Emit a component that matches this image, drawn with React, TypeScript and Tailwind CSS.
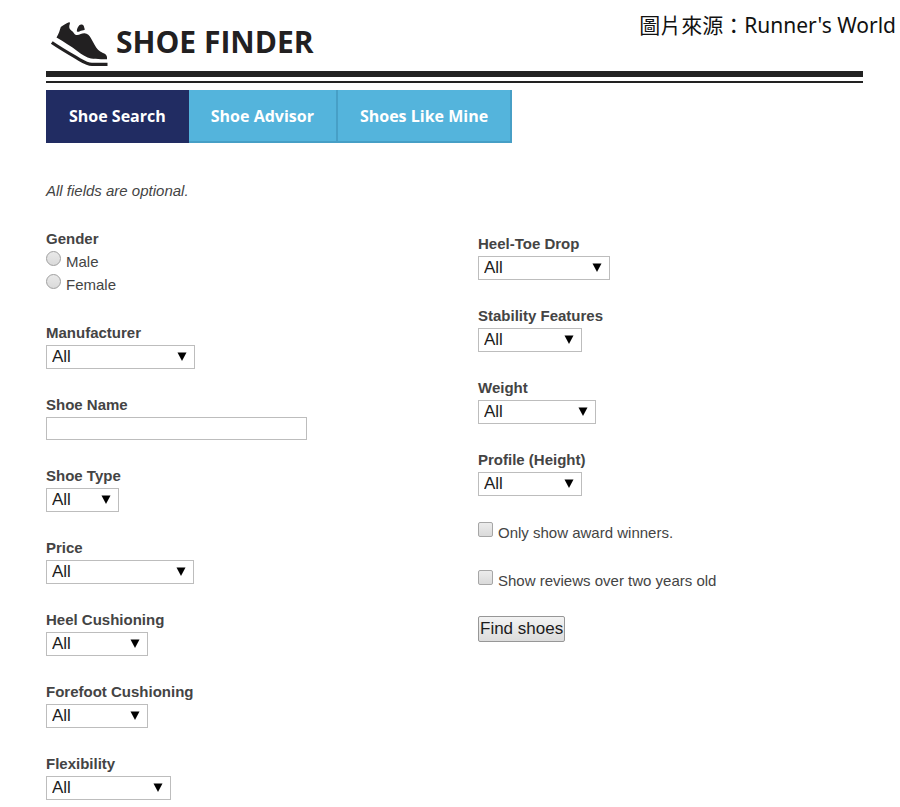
import type { ReactNode } from "react";

const tabs = [
  { label: "Shoe Search", className: "bg-[#212c62] px-[23px]" },
  { label: "Shoe Advisor", className: "bg-[#54b4dc] px-[22px] border-r-2 border-b-2 border-[#479fc6]" },
  { label: "Shoes Like Mine", className: "bg-[#54b4dc] px-[22px] border-r-2 border-b-2 border-[#479fc6]" },
];

function ShoeLogo() {
  return (
    <svg viewBox="0 0 58 46" className="h-[46px] w-[58px]" fill="#222021" aria-hidden="true">
      <path d="M19 1.200C16 2.500 13 4.200 10.800 6C9.700 9.500 8.800 12.700 6.500 16.600C14 21 21 25.500 27.500 30.200C32 33.500 36.500 36.600 41 37.600C45 38.400 51 38.200 57 38.200C57.300 35 56.500 33.300 53 32C49 30.500 46.500 27.500 44.700 24L40.800 17C39.500 14.500 37.500 12.400 34.500 12.300C31.500 12.200 29 14.600 26 13.900C23.900 13.300 23.900 11.500 22.300 10.200C19.500 8.700 18.500 6.500 19.900 2.600C20.100 1.700 19.700 1 19 1.200Z" />
      <path d="M26.800 10.300C27 7.500 28 5.800 29.300 4.300C30.600 3 32.700 3.300 33.700 4.800L34.800 8.500C34.300 9.600 32.500 9.200 31 9.700C29.500 10.200 28.200 11.500 26.800 10.300Z" />
      <path d="M1.800 21.500C10.500 27.500 21 33.500 30 38.800C34 41.200 37.500 43.300 42 43.300H57.500" fill="none" stroke="#222021" strokeWidth="3.200" />
    </svg>
  );
}

function Field({ id, label, children }: { id: string; label: string; children: ReactNode }) {
  return (
    <div className="flex flex-col items-start">
      <label htmlFor={id} className="text-[15px] leading-6 font-bold">
        {label}
      </label>
      {children}
    </div>
  );
}

function SelectField({ id, label, width }: { id: string; label: string; width: string }) {
  return (
    <Field id={id} label={label}>
      <div className={`relative ${width}`}>
        <select
          id={id}
          className="block h-6 w-full appearance-none border border-[#bdbdbd] bg-white pl-[5px] text-[17px] leading-[22px] text-[#1c1c1c]"
        >
          <option>All</option>
        </select>
        <svg viewBox="0 0 10 9" className="pointer-events-none absolute top-[7px] right-2 h-[9px] w-[10px]" aria-hidden="true">
          <path d="M0.500 0.500H9.500L5 9Z" fill="#000" />
        </svg>
      </div>
    </Field>
  );
}

function Radio({ label }: { label: string }) {
  return (
    <label className="flex h-[23px] items-start gap-[5px]">
      <input
        type="radio"
        name="gender"
        className="size-[15px] appearance-none rounded-full border border-[#9f9f9f] bg-linear-to-b from-[#e9e9e9] to-[#dadada] checked:border-4"
      />
      <span className="text-[15px] leading-[22px]">{label}</span>
    </label>
  );
}

function Checkbox({ label }: { label: string }) {
  return (
    <label className="flex h-6 items-start gap-[5px]">
      <input
        type="checkbox"
        className="mt-[2px] size-[15px] appearance-none rounded-xs border border-[#a6a6a6] bg-linear-to-b from-[#ececec] to-[#dadada] checked:bg-[#555]"
      />
      <span className="text-[15px] leading-[26px]">{label}</span>
    </label>
  );
}

export default function App() {
  return (
    <div className="bg-white font-['Liberation_Sans',Arial,sans-serif] text-[#444]">
      <header className="flex items-start justify-between pt-3 pr-1 pl-[50px]">
        <div className="flex items-start gap-2 pt-[9px] pb-1">
          <ShoeLogo />
          <h1 className="font-['Open_Sans',sans-serif] text-[30px] leading-[42px] font-bold whitespace-nowrap text-[#222021]">
            SHOE FINDER
          </h1>
        </div>
        <p className="font-['Noto_Sans','Noto_Sans_CJK_TC',sans-serif] text-[21px] leading-[26px] whitespace-nowrap text-[#111]">
          圖片來源：Runner's World
        </p>
      </header>

      <main className="pr-[37px] pl-[46px]">
        <div className="h-[12px] border-t-6 border-b-2 border-[#222]" />

        <nav className="mt-[7px] flex">
          {tabs.map((tab) => (
            <a
              key={tab.label}
              href="#"
              className={`h-[53px] font-['Open_Sans',sans-serif] text-[16px] leading-[52px] font-bold whitespace-nowrap text-white ${tab.className}`}
            >
              {tab.label}
            </a>
          ))}
        </nav>

        <p className="mt-9 text-[15px] leading-6 italic">All fields are optional.</p>

        <form className="mt-6 grid grid-cols-[432fr_385fr]" onSubmit={(e) => e.preventDefault()}>
          <div className="flex flex-col gap-6">
            <fieldset>
              <legend className="text-[15px] leading-6 font-bold">Gender</legend>
              <Radio label="Male" />
              <Radio label="Female" />
            </fieldset>
            <SelectField id="manufacturer" label="Manufacturer" width="w-[149px]" />
            <Field id="shoe-name" label="Shoe Name">
              <input id="shoe-name" type="text" className="h-[23px] w-[261px] border border-[#bdbdbd] bg-white px-1 text-[15px]" />
            </Field>
            <SelectField id="shoe-type" label="Shoe Type" width="w-[73px]" />
            <SelectField id="price" label="Price" width="w-[148px]" />
            <SelectField id="heel-cushioning" label="Heel Cushioning" width="w-[102px]" />
            <SelectField id="forefoot-cushioning" label="Forefoot Cushioning" width="w-[102px]" />
            <SelectField id="flexibility" label="Flexibility" width="w-[125px]" />
          </div>

          <div className="flex flex-col items-start gap-6 pt-[5px]">
            <SelectField id="heel-toe-drop" label="Heel-Toe Drop" width="w-[132px]" />
            <SelectField id="stability" label="Stability Features" width="w-[104px]" />
            <SelectField id="weight" label="Weight" width="w-[118px]" />
            <SelectField id="profile" label="Profile (Height)" width="w-[104px]" />
            <Checkbox label="Only show award winners." />
            <Checkbox label="Show reviews over two years old" />
            <button
              type="submit"
              className="h-[26px] rounded-xs border border-[#979797] bg-linear-to-b from-[#f3f3f3] to-[#dcdcdc] px-px text-[17px] leading-6 text-[#1c1c1c]"
            >
              Find shoes
            </button>
          </div>
        </form>
      </main>
    </div>
  );
}
